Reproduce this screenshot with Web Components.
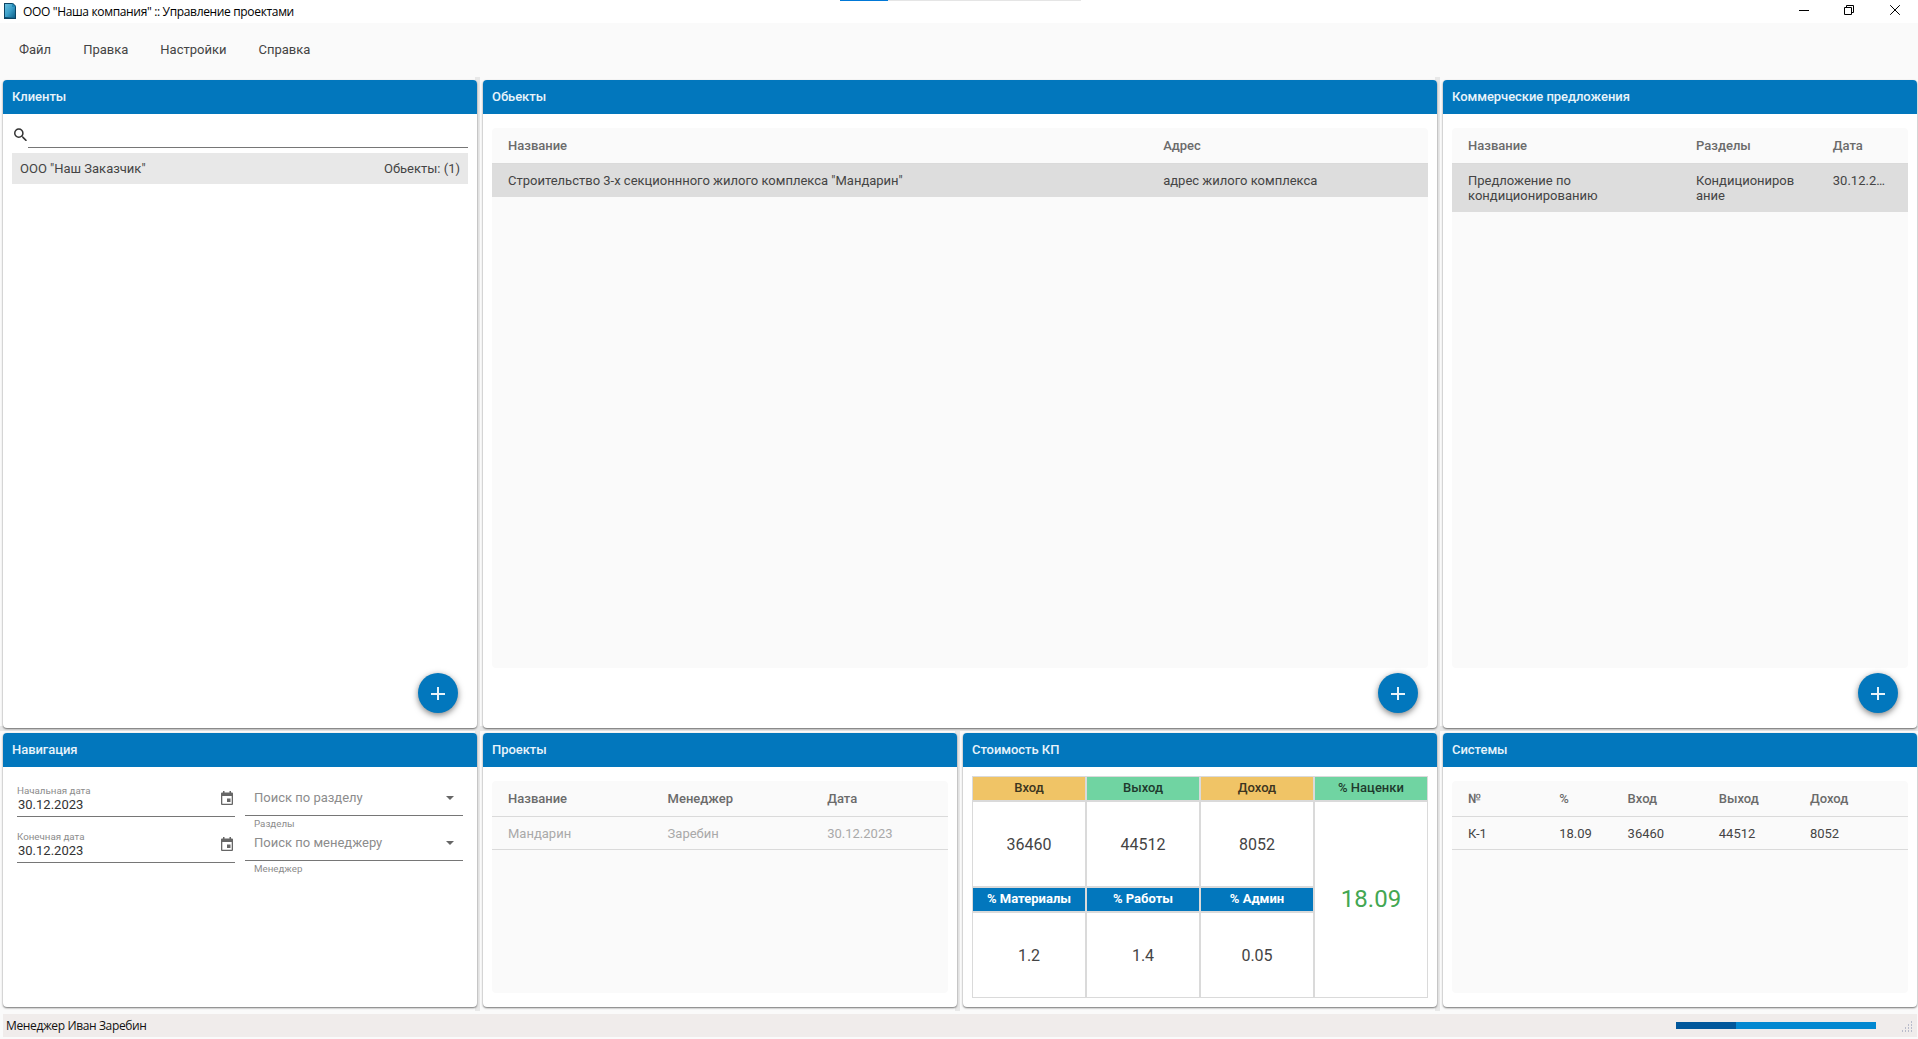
<!DOCTYPE html>
<html lang="ru">
<head>
<meta charset="utf-8">
<title>Управление проектами</title>
<style>
  html, body {
    height: 100%;
    margin: 0;
    overflow: hidden;
    background: #fafafa;
  }

  body {
    --primary: #0277bd;
    --line: #dadada;
    font: 13px/15px Roboto, "Liberation Sans", sans-serif;
    color: #444;
  }
</style>
</head>
<body>
<app-window></app-window>

<script>
class TitleBar extends HTMLElement {
  constructor() {
    super();
    this.attachShadow({ mode: 'open' }).innerHTML = `
      <style>
      :host {
        display: flex;
        align-items: center;
        position: relative;
        height: 23px;
        background: #fff;
        color: #000;
        font: 12px/16px "Open Sans", "Noto Sans", sans-serif;
      }

      .logo {
        margin: 0 7px 1px 4px;
      }

      .caption {
        flex: 1;
        letter-spacing: -0.34px;
        white-space: nowrap;
      }

      .buttons {
        display: flex;
        gap: 35px;
        padding: 0 17px 3px 0;
      }

      .buttons svg {
        display: block;
        fill: none;
        stroke: #000;
      }

      .buttons svg:first-child {
        margin-right: -1px;
      }

      .loading {
        position: absolute;
        left: 840px;
        top: 0;
        width: 241px;
        height: 1px;
        background: linear-gradient(90deg, #0078d7 48px, #e5e5e5 48px);
      }
      </style>

      <svg class="logo" width="12" height="16" viewBox="0 0 12 16">
        <defs>
          <linearGradient id="g" x1="0" y1="0" x2="1" y2="1">
            <stop offset="0" stop-color="#69bede"/>
            <stop offset=".5" stop-color="#3b9fc9"/>
            <stop offset="1" stop-color="#0e5f88"/>
          </linearGradient>
        </defs>
        <path d="M0 0h9l3 3v13H0z" fill="#0c4565"/>
        <path d="M1 1h7v3h3v11L1 14z" fill="url(#g)"/>
        <path d="M8 0l4 4H8z" fill="#2387b3"/>
      </svg>
      <span class="caption"><slot></slot></span>
      <div class="buttons">
        <svg width="11" height="11" viewBox="0 0 11 11"><path d="M0 5.5h10"/></svg>
        <svg width="11" height="11" viewBox="0 0 11 11"><path d="M.5 2.5h7v7h-7zM2.5 2.5v-2h7v7h-2"/></svg>
        <svg width="11" height="11" viewBox="0 0 11 11"><path d="M.2.2l9.6 9.6M9.8.2L.2 9.8"/></svg>
      </div>
      <div class="loading"></div>
    `;
  }
}

class MenuBar extends HTMLElement {
  constructor() {
    super();
    this.attachShadow({ mode: 'open' }).innerHTML = `
      <style>
      :host {
        display: flex;
        align-items: center;
        gap: 32px;
        box-sizing: border-box;
        height: 54px;
        padding: 0 0 2px 19px;
      }
      </style>
      <slot></slot>
    `;
  }
}

class PanelCard extends HTMLElement {
  constructor() {
    super();
    this.attachShadow({ mode: 'open' });
  }

  connectedCallback() {
    this.shadowRoot.innerHTML = `
      <style>
      :host {
        display: flex;
        flex-direction: column;
        position: relative;
        min-width: 0;
        background: #fff;
        border-radius: 4px;
        box-shadow: 0 1px 2px rgba(0, 0, 0, .55);
      }

      header {
        box-sizing: border-box;
        height: 34px;
        padding: 9px 9px 0;
        border-radius: 4px 4px 0 0;
        background: var(--primary);
        color: #e8f3fa;
        font-weight: 500;
        letter-spacing: -0.05px;
      }

      .body {
        flex: 1;
        display: flex;
        flex-direction: column;
        min-height: 0;
        padding: var(--body-padding, 14px 9px);
      }

      /* the button floats over the lower right corner of the card */
      .add {
        position: absolute;
        right: 19px;
        bottom: 15px;
        width: 40px;
        height: 40px;
        padding: 0;
        border: 0;
        border-radius: 50%;
        background: var(--primary);
        box-shadow: 0 2px 6px rgba(0, 0, 0, .5);
      }

      .add svg {
        display: block;
        margin: 13px;
      }
      </style>

      <header>${this.getAttribute('heading')}</header>
      <div class="body"><slot></slot></div>
      ${this.hasAttribute('addable') ? `
        <button class="add">
          <svg width="14" height="14" viewBox="0 0 14 14" fill="#e8f3fa">
            <path d="M6 1h2v6h6v2H8v6H6V9H0V7h6z"/>
          </svg>
        </button>` : ''}
    `;
  }
}

class DataTable extends HTMLElement {
  constructor() {
    super();
    this.attachShadow({ mode: 'open' });
  }

  set data({ columns, rows, widths, state = '' }) {
    this._data = { columns, rows, widths, state };
    this.render();
  }

  render() {
    const { columns, rows, widths, state } = this._data;
    const cells = (items) => items.map((text) => `<span>${text}</span>`).join('');

    this.shadowRoot.innerHTML = `
      <style>
      :host {
        display: block;
        flex: 1;
        background: #fafafa;
        border-radius: 4px;
      }

      .row {
        display: grid;
        grid-template-columns: ${widths};
        padding: 9px 0 8px;
        border-bottom: 1px solid var(--line);
      }

      .head {
        padding: 10px 0;
        color: #6b6b6b;
        font-weight: 500;
      }

      span {
        padding: 0 16px;
        overflow: hidden;
        text-overflow: ellipsis;
        overflow-wrap: anywhere;
      }

      span:last-child {
        white-space: nowrap;
      }

      .selected {
        background: #ddd;
        border-bottom-color: #ddd;
      }

      .disabled {
        color: #a9a9a9;
      }
      </style>

      <div class="row head">${cells(columns)}</div>
      ${rows.map((row) => `<div class="row ${state}">${cells(row)}</div>`).join('')}
    `;
  }
}

class ClientList extends HTMLElement {
  constructor() {
    super();
    this.attachShadow({ mode: 'open' }).innerHTML = `
      <style>
      :host {
        display: block;
      }

      .search {
        display: flex;
        height: 34px;
        margin-bottom: 5px;
      }

      .search svg {
        margin: 14px 1px 0 2px;
      }

      .line {
        flex: 1;
        border-bottom: 1px solid #767676;
      }

      .item {
        display: flex;
        justify-content: space-between;
        padding: 8px;
        background: #e8e8e8;
      }
      </style>

      <div class="search">
        <svg width="13" height="13" viewBox="3 2.5 17.5 17.5" fill="#333">
          <path d="M15.5 14h-.79l-.28-.27A6.47 6.47 0 0 0 16 9.5 6.5 6.5 0 1 0 9.5 16c1.61 0 3.09-.59 4.23-1.57l.27.28v.79l5 4.99L20.49 19l-4.99-5zm-6 0C7.01 14 5 11.99 5 9.5S7.01 5 9.5 5 14 7.01 14 9.5 11.99 14 9.5 14z"/>
        </svg>
        <div class="line"></div>
      </div>
      <div class="item"><slot name="name"></slot><slot name="count"></slot></div>
    `;
  }
}

class DateField extends HTMLElement {
  constructor() {
    super();
    this.attachShadow({ mode: 'open' });
  }

  connectedCallback() {
    this.shadowRoot.innerHTML = `
      <style>
      :host {
        display: flex;
        box-sizing: border-box;
        justify-content: space-between;
        height: 46px;
        padding-top: 13px;
      }

      .field {
        flex: 1;
        display: flex;
        justify-content: space-between;
        height: 31px;
        border-bottom: 1px solid #767676;
      }

      label {
        display: block;
        font-size: 9.75px;
        line-height: 11px;
        color: #8c8c8c;
      }

      .value {
        padding: 1px 0 0 1px;
        color: #333;
      }

      svg {
        margin: 6px 2px 0 0;
      }
      </style>

      <div class="field">
        <div>
          <label>${this.getAttribute('label')}</label>
          <div class="value">${this.getAttribute('value')}</div>
        </div>
        <svg width="12" height="14" viewBox="0 0 12 14" fill="#666">
          <path d="M2 0h1.5v1.5h5V0H10v1.5h1a1 1 0 0 1 1 1V13a1 1 0 0 1-1 1H1a1 1 0 0 1-1-1V2.500a1 1 0 0 1 1-1h1zM1.300 5v7.700h9.400V5zM6 7.500h3.500V11H6z" fill-rule="evenodd"/>
        </svg>
      </div>
    `;
  }
}

class SelectField extends HTMLElement {
  constructor() {
    super();
    this.attachShadow({ mode: 'open' });
  }

  connectedCallback() {
    this.shadowRoot.innerHTML = `
      <style>
      :host {
        display: block;
        height: 45px;
        color: #8c8c8c;
      }

      .field {
        display: flex;
        align-items: center;
        justify-content: space-between;
        box-sizing: border-box;
        height: 36px;
        padding: 0 9px;
        border-bottom: 1px solid #767676;
      }

      .hint {
        padding: 2px 9px 0;
        font-size: 9.75px;
        line-height: 11px;
      }
      </style>

      <div class="field">
        ${this.getAttribute('placeholder')}
        <svg width="8" height="4" viewBox="0 0 8 4"><path d="M0 0h8L4 4z" fill="#666"/></svg>
      </div>
      <div class="hint">${this.getAttribute('hint')}</div>
    `;
  }
}

class NavFilters extends HTMLElement {
  constructor() {
    super();
    this.attachShadow({ mode: 'open' }).innerHTML = `
      <style>
      :host {
        display: grid;
        grid-template-columns: 218px 218px;
        gap: 10px;
        padding-left: 5px;
      }

      .dates {
        padding-top: 5px;
      }

      .selects {
        padding-top: 13px;
      }
      </style>

      <div class="dates">
        <date-field label="Начальная дата" value="30.12.2023"></date-field>
        <date-field label="Конечная дата" value="30.12.2023"></date-field>
      </div>
      <div class="selects">
        <select-field placeholder="Поиск по разделу" hint="Разделы"></select-field>
        <select-field placeholder="Поиск по менеджеру" hint="Менеджер"></select-field>
      </div>
    `;
  }
}

class PriceGrid extends HTMLElement {
  constructor() {
    super();
    this.attachShadow({ mode: 'open' }).innerHTML = `
      <style>
      :host {
        display: grid;
        grid-template-columns: repeat(4, 1fr);
        grid-template-rows: 25px 86px 25px 86px;
        text-align: center;
      }

      div {
        display: flex;
        align-items: center;
        justify-content: center;
        border: 1px solid var(--line);
        font-size: 16px;
      }

      .in, .out, .part {
        align-items: flex-start;
        padding-top: 3px;
        font-size: 13px;
        font-weight: 500;
        color: #3c3520;
      }

      .in {
        background: #f0c466;
      }

      .out {
        background: #70d4a2;
        color: #1f3a2d;
      }

      .part {
        background: var(--primary);
        color: #fff;
        font-weight: 700;
      }

      .total {
        grid-area: 2 / 4 / 5 / 5;
        font-size: 24px;
        color: #43a752;
      }
      </style>

      <div class="in">Вход</div>
      <div class="out">Выход</div>
      <div class="in">Доход</div>
      <div class="out">% Наценки</div>
      <div>36460</div>
      <div>44512</div>
      <div>8052</div>
      <div class="total">18.09</div>
      <div class="part">% Материалы</div>
      <div class="part">% Работы</div>
      <div class="part">% Админ</div>
      <div>1.2</div>
      <div>1.4</div>
      <div>0.05</div>
    `;
  }
}

class StatusBar extends HTMLElement {
  constructor() {
    super();
    this.attachShadow({ mode: 'open' }).innerHTML = `
      <style>
      :host {
        display: flex;
        align-items: center;
        height: 23px;
        margin: 0 1px 2px 3px;
        padding: 0 5px 0 3px;
        background: #f0eceb;
        color: #111;
        font: 12px/16px "Open Sans", "Noto Sans", sans-serif;
      }

      .text {
        flex: 1;
        letter-spacing: -0.37px;
      }

      .progress {
        width: 200px;
        height: 7px;
        margin-right: 26px;
        background: linear-gradient(90deg, #01579b 60px, #0288d1 60px);
      }

      .grip {
        margin-top: 2px;
      }
      </style>

      <span class="text"><slot></slot></span>
      <div class="progress"></div>
      <svg class="grip" width="10" height="11" viewBox="0 0 10 11" fill="#b9bccb">
        <path d="M9 0h1v2H9zM9 3h1v2H9zM9 6h1v2H9zM9 9h1v2H9zM6 3h1v2H6zM6 6h1v2H6zM6 9h1v2H6zM3 6h1v2H3zM3 9h1v2H3zM0 9h1v2H0z"/>
      </svg>
    `;
  }
}

class AppWindow extends HTMLElement {
  constructor() {
    super();
    this.attachShadow({ mode: 'open' }).innerHTML = `
      <style>
      :host {
        display: flex;
        flex-direction: column;
        height: 100vh;
      }

      /* splitters are painted under the cards */
      main {
        flex: 1;
        display: grid;
        grid-template-columns: repeat(4, minmax(0, 1fr));
        grid-template-rows: 648px 274px;
        gap: 5px 6px;
        padding: 3px 1px 0 3px;
        background:
          linear-gradient(#e8e8e8, #e8e8e8) 475px 0 / 5px 934px,
          linear-gradient(#e8e8e8, #e8e8e8) 955px 654px / 5px 280px,
          linear-gradient(#e8e8e8, #e8e8e8) 1435px 0 / 5px 934px,
          linear-gradient(#e8e8e8, #e8e8e8) 0 649px / 100% 5px;
        background-repeat: no-repeat;
      }

      .clients {
        --body-padding: 0 9px;
      }

      .objects {
        grid-column: span 2;
      }

      .objects, .offers {
        --body-padding: 14px 9px 60px;
      }

      .nav {
        --body-padding: 0 9px;
      }

      .price {
        --body-padding: 9px;
      }
      </style>

      <title-bar>ООО "Наша компания" :: Управление проектами</title-bar>
      <menu-bar>
        <span>Файл</span>
        <span>Правка</span>
        <span>Настройки</span>
        <span>Справка</span>
      </menu-bar>
      <main>
        <panel-card class="clients" heading="Клиенты" addable>
          <client-list>
            <span slot="name">ООО "Наш Заказчик"</span>
            <span slot="count">Обьекты: (1)</span>
          </client-list>
        </panel-card>
        <panel-card class="objects" heading="Обьекты" addable>
          <data-table id="objects"></data-table>
        </panel-card>
        <panel-card class="offers" heading="Коммерческие предложения" addable>
          <data-table id="offers"></data-table>
        </panel-card>
        <panel-card class="nav" heading="Навигация">
          <nav-filters></nav-filters>
        </panel-card>
        <panel-card heading="Проекты">
          <data-table id="projects"></data-table>
        </panel-card>
        <panel-card class="price" heading="Стоимость КП">
          <price-grid></price-grid>
        </panel-card>
        <panel-card heading="Системы">
          <data-table id="systems"></data-table>
        </panel-card>
      </main>
      <status-bar>Менеджер Иван Заребин</status-bar>
    `;
  }

  connectedCallback() {
    const table = (id) => this.shadowRoot.getElementById(id);

    table('objects').data = {
      columns: ['Название', 'Адрес'],
      rows: [['Строительство 3-х секционнного жилого комплекса "Мандарин"', 'адрес жилого комплекса']],
      widths: '70% 30%',
      state: 'selected',
    };
    table('offers').data = {
      columns: ['Название', 'Разделы', 'Дата'],
      rows: [['Предложение по кондиционированию', 'Кондиционирование', '30.12.2023']],
      widths: '50% 30% 20%',
      state: 'selected',
    };
    table('projects').data = {
      columns: ['Название', 'Менеджер', 'Дата'],
      rows: [['Мандарин', 'Заребин', '30.12.2023']],
      widths: '35% 35% 30%',
      state: 'disabled',
    };
    table('systems').data = {
      columns: ['№', '%', 'Вход', 'Выход', 'Доход'],
      rows: [['К-1', '18.09', '36460', '44512', '8052']],
      widths: '20% 15% 20% 20% 25%',
    };
  }
}

customElements.define('title-bar', TitleBar);
customElements.define('menu-bar', MenuBar);
customElements.define('panel-card', PanelCard);
customElements.define('data-table', DataTable);
customElements.define('client-list', ClientList);
customElements.define('date-field', DateField);
customElements.define('select-field', SelectField);
customElements.define('nav-filters', NavFilters);
customElements.define('price-grid', PriceGrid);
customElements.define('status-bar', StatusBar);
customElements.define('app-window', AppWindow);
</script>
</body>
</html>
